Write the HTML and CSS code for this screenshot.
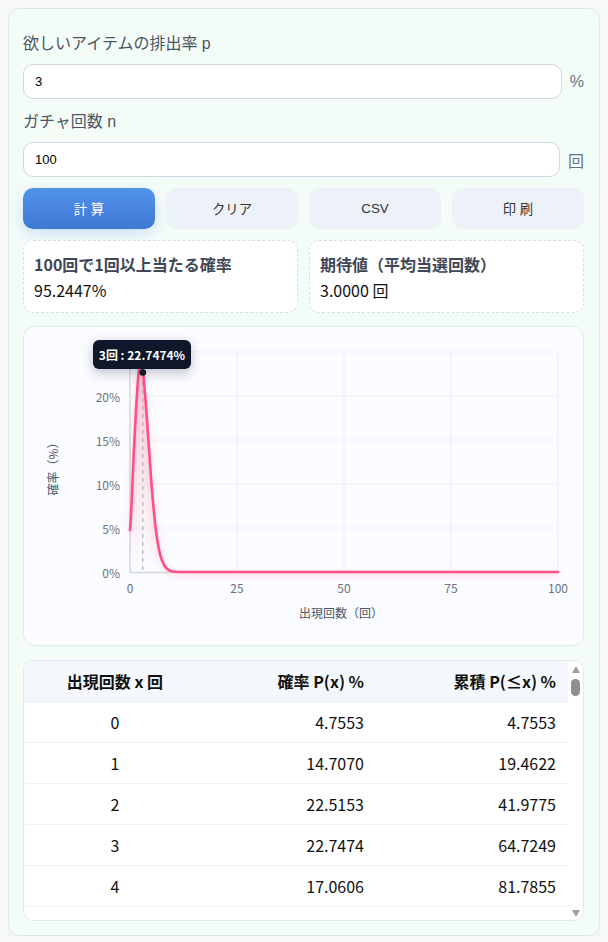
FILE: index.html
```html
<!DOCTYPE html>
<html lang="ja">
<head>
<meta charset="utf-8">
<title>ガチャ確率計算</title>
<link rel="stylesheet" href="styles.css">
</head>
<body>
<div class="panel">
  <div class="field">
    <label class="label" for="rate">欲しいアイテムの排出率 p</label>
    <div class="input-row">
      <input id="rate" class="input" type="text" value="3">
      <span class="unit">%</span>
    </div>
  </div>
  <div class="field">
    <label class="label" for="count">ガチャ回数 n</label>
    <div class="input-row">
      <input id="count" class="input" type="text" value="100">
      <span class="unit">回</span>
    </div>
  </div>
  <div class="buttons">
    <button class="btn btn-primary" type="button">計 算</button>
    <button class="btn" type="button">クリア</button>
    <button class="btn" type="button">CSV</button>
    <button class="btn" type="button">印 刷</button>
  </div>
  <div class="results">
    <div class="result">
      <div class="result-title">100回で1回以上当たる確率</div>
      <div class="result-value">95.2447%</div>
    </div>
    <div class="result">
      <div class="result-title">期待値（平均当選回数）</div>
      <div class="result-value">3.0000 回</div>
    </div>
  </div>
  <div class="chart-card">
    <svg class="chart" viewBox="24 327 559 318" width="559" height="318" xmlns="http://www.w3.org/2000/svg">
      <defs>
        <linearGradient id="areaFill" x1="0" y1="372" x2="0" y2="572" gradientUnits="userSpaceOnUse">
          <stop offset="0" stop-color="#ff4f85" stop-opacity="0.24"/>
          <stop offset="1" stop-color="#ff4f85" stop-opacity="0"/>
        </linearGradient>
      </defs>
      <g class="grid">
        <line x1="130" y1="352" x2="558" y2="352"/>
        <line x1="130" y1="396" x2="558" y2="396"/>
        <line x1="130" y1="440" x2="558" y2="440"/>
        <line x1="130" y1="484" x2="558" y2="484"/>
        <line x1="130" y1="528" x2="558" y2="528"/>
        <line x1="237" y1="352" x2="237" y2="572"/>
        <line x1="344" y1="352" x2="344" y2="572"/>
        <line x1="451" y1="352" x2="451" y2="572"/>
        <line x1="558" y1="352" x2="558" y2="572"/>
      </g>
      <g class="axis">
        <line x1="130" y1="352" x2="130" y2="573"/>
        <line x1="129" y1="572.5" x2="558" y2="572.5"/>
      </g>
      <g class="ytick">
        <text x="120" y="396">20%</text>
        <text x="120" y="440">15%</text>
        <text x="120" y="484">10%</text>
        <text x="120" y="528">5%</text>
        <text x="120" y="572">0%</text>
      </g>
      <g class="xtick">
        <text x="130" y="587">0</text>
        <text x="237" y="587">25</text>
        <text x="344" y="587">50</text>
        <text x="451" y="587">75</text>
        <text x="558" y="587">100</text>
      </g>
      <text class="axis-title" x="341" y="612">出現回数（回）</text>
      <text class="axis-title" x="52" y="466" transform="rotate(-90 52 466)">確率（%）</text>
      <path class="area" d="M130,530.15 C131.43,515.55 132.85,468.63 134.28,442.58 C135.71,416.53 137.13,385.66 138.56,373.87 C139.99,362.08 141.41,363.82 142.84,371.82 C144.27,379.82 145.69,403.37 147.12,421.87 C148.55,440.37 149.97,465.10 151.40,482.85 C152.83,500.60 154.25,516.50 155.68,528.34 C157.11,540.18 158.53,547.68 159.96,553.87 C161.39,560.06 162.81,562.80 164.24,565.48 C165.67,568.16 167.09,568.95 168.52,569.94 C169.95,570.93 171.37,571.10 172.80,571.42 C174.23,571.74 175.65,571.76 177.08,571.85 L181.36,571.97 L185.64,572 L558,572 L130,572 Z"/>
      <line class="hover-line" x1="142.84" y1="374" x2="142.84" y2="570"/>
      <path class="curve" d="M130,530.15 C131.43,515.55 132.85,468.63 134.28,442.58 C135.71,416.53 137.13,385.66 138.56,373.87 C139.99,362.08 141.41,363.82 142.84,371.82 C144.27,379.82 145.69,403.37 147.12,421.87 C148.55,440.37 149.97,465.10 151.40,482.85 C152.83,500.60 154.25,516.50 155.68,528.34 C157.11,540.18 158.53,547.68 159.96,553.87 C161.39,560.06 162.81,562.80 164.24,565.48 C165.67,568.16 167.09,568.95 168.52,569.94 C169.95,570.93 171.37,571.10 172.80,571.42 C174.23,571.74 175.65,571.76 177.08,571.85 L181.36,571.97 L185.64,572 L558,572"/>
      <circle class="dot" cx="142.84" cy="372.5" r="3.3"/>
    </svg>
    <div class="tooltip">3回 : 22.7474%</div>
  </div>
  <div class="table-card">
    <div class="table-scroll">
      <table class="dist">
        <colgroup><col class="col-x"><col class="col-p"><col class="col-c"></colgroup>
        <thead>
          <tr><th class="center">出現回数 x 回</th><th class="right">確率 P(x) %</th><th class="right">累積 P(≤x) %</th></tr>
        </thead>
        <tbody>
          <tr><td class="center">0</td><td class="right">4.7553</td><td class="right">4.7553</td></tr>
          <tr><td class="center">1</td><td class="right">14.7070</td><td class="right">19.4622</td></tr>
          <tr><td class="center">2</td><td class="right">22.5153</td><td class="right">41.9775</td></tr>
          <tr><td class="center">3</td><td class="right">22.7474</td><td class="right">64.7249</td></tr>
          <tr><td class="center">4</td><td class="right">17.0606</td><td class="right">81.7855</td></tr>
          <tr><td class="center">5</td><td class="right">10.1308</td><td class="right">91.9162</td></tr>
        </tbody>
      </table>
    </div>
    <div class="scrollbar" aria-hidden="true">
      <span class="sb-up"></span>
      <span class="sb-thumb"></span>
      <span class="sb-track"></span>
      <span class="sb-down"></span>
    </div>
  </div>
</div>
</body>
</html>
```

FILE: styles.css
```css
html, body {
  background: #f6f8fa;
}
body {
  margin: 8px 8px 0;
  font-family: "Liberation Sans", "Noto Sans CJK JP", sans-serif;
}
.panel {
  box-sizing: border-box;
  display: flex;
  flex-direction: column;
  gap: 11px;
  padding: 23px 15px 14px 14px;
  background: #f4fcf8;
  border: 1px solid #dde6ea;
  border-radius: 12px;
  box-shadow: 0 4px 16px rgba(15, 23, 42, 0.04);
}
.field {
  display: flex;
  flex-direction: column;
  gap: 8px;
}
.label {
  font-size: 16px;
  line-height: 24px;
  color: #4b5563;
}
.input-row {
  display: flex;
  align-items: center;
  gap: 8px;
}
.input {
  flex: 1;
  box-sizing: border-box;
  height: 35px;
  min-width: 0;
  padding: 0 11px;
  border: 1px solid #cfd8e3;
  border-radius: 10px;
  background: #fff;
  font-family: "Liberation Sans", sans-serif;
  font-size: 13px;
  color: #000;
}
.unit {
  font-size: 16px;
  color: #64748b;
}
.buttons {
  display: grid;
  grid-template-columns: repeat(4, 1fr);
  gap: 11px;
}
.btn {
  height: 41px;
  border: none;
  border-radius: 10px;
  background: #edf2f9;
  color: #333;
  font-family: "Liberation Sans", "Noto Sans CJK JP", sans-serif;
  font-size: 13.33px;
}
.btn-primary {
  background: linear-gradient(180deg, #5292eb 0%, #3e78d4 100%);
  color: #fff;
  box-shadow: 0 5px 14px rgba(59, 130, 246, 0.22);
}
.results {
  display: grid;
  grid-template-columns: 1fr 1fr;
  gap: 11px;
}
.result {
  padding: 11px 10px 10px;
  background: #fff;
  border: 1px dashed #d5dde6;
  border-radius: 10px;
  font-family: "Noto Sans CJK JP", sans-serif;
}
.result-title {
  font-size: 16px;
  font-weight: 700;
  line-height: 24px;
  color: #3f4756;
}
.result-value {
  margin-top: 2px;
  font-size: 16px;
  line-height: 24px;
  color: #111;
}
.chart-card {
  position: relative;
  margin-top: 2px;
  height: 318px;
  background: #fbfcff;
  border: 1px solid #e1ebe7;
  border-radius: 11px;
}
.chart {
  display: block;
  font-family: "Noto Sans CJK JP", sans-serif;
}
.grid line {
  stroke: #edf0f5;
  stroke-width: 1.2;
}
.axis line {
  stroke: #d3d8df;
  stroke-width: 1.5;
}
.ytick text, .xtick text {
  font-size: 12px;
  fill: #6b7280;
  dominant-baseline: central;
}
.ytick text {
  text-anchor: end;
}
.xtick text {
  text-anchor: middle;
}
.axis-title {
  font-size: 12px;
  fill: #4b5563;
  text-anchor: middle;
  dominant-baseline: central;
}
.area {
  fill: url(#areaFill);
}
.curve {
  fill: none;
  stroke: #ff4f85;
  stroke-width: 2.6;
  stroke-linejoin: round;
  stroke-linecap: round;
  filter: drop-shadow(0 2px 3px rgba(255, 79, 133, 0.3));
}
.hover-line {
  stroke: #9ca3af;
  stroke-width: 1;
  stroke-dasharray: 4 4;
}
.dot {
  fill: #111827;
}
.tooltip {
  position: absolute;
  left: 69px;
  top: 13px;
  width: 98px;
  height: 29px;
  display: flex;
  align-items: center;
  justify-content: center;
  background: #0f172a;
  border-radius: 6px;
  color: #fff;
  font-family: "Noto Sans CJK JP", sans-serif;
  font-size: 12px;
  font-weight: 700;
  white-space: nowrap;
  box-shadow: 0 4px 12px rgba(15, 23, 42, 0.25);
}
.table-card {
  display: flex;
  height: 259px;
  margin-top: 3px;
  background: #fff;
  border: 1px solid #e2e8f0;
  border-radius: 10px;
  overflow: hidden;
}
.table-scroll {
  flex: 1;
  min-width: 0;
  overflow: hidden;
}
.scrollbar {
  flex: 0 0 15px;
  display: flex;
  flex-direction: column;
  align-items: center;
  background: #fff;
}
.sb-up {
  width: 0;
  height: 0;
  margin-top: 5px;
  border-left: 4px solid transparent;
  border-right: 4px solid transparent;
  border-bottom: 7px solid #a0a0a0;
}
.sb-thumb {
  width: 9px;
  height: 17px;
  margin-top: 6px;
  border-radius: 5px;
  background: #8e8e8e;
}
.sb-track {
  flex: 1;
}
.sb-down {
  width: 0;
  height: 0;
  margin-bottom: 3px;
  border-left: 4px solid transparent;
  border-right: 4px solid transparent;
  border-top: 7px solid #a0a0a0;
}
.dist {
  width: 100%;
  border-collapse: collapse;
  table-layout: fixed;
  font-family: "Noto Sans CJK JP", sans-serif;
  font-size: 16px;
  color: #111;
}
.col-x { width: 182px; }
.col-p { width: 170px; }
.dist th {
  height: 40px;
  padding: 0 12px;
  background: #f4f8fc;
  font-weight: 700;
  border-bottom: 1px solid #e6edf4;
}
.dist td {
  height: 40px;
  padding: 0 12px;
  border-bottom: 1px solid #edf1f6;
}
.center { text-align: center; }
.right { text-align: right; }
```
